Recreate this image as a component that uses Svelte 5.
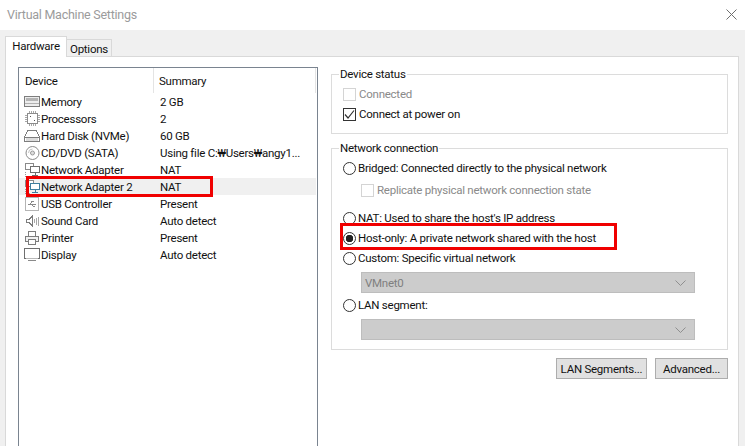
<script>
  const devices = [
    { icon: 'memory', name: 'Memory', summary: '2 GB' },
    { icon: 'cpu', name: 'Processors', summary: '2' },
    { icon: 'disk', name: 'Hard Disk (NVMe)', summary: '60 GB' },
    { icon: 'cd', name: 'CD/DVD (SATA)', summary: 'Using file C:₩Users₩angy1...' },
    { icon: 'net', name: 'Network Adapter', summary: 'NAT' },
    { icon: 'net', name: 'Network Adapter 2', summary: 'NAT', selected: true },
    { icon: 'usb', name: 'USB Controller', summary: 'Present' },
    { icon: 'sound', name: 'Sound Card', summary: 'Auto detect' },
    { icon: 'printer', name: 'Printer', summary: 'Present' },
    { icon: 'display', name: 'Display', summary: 'Auto detect' }
  ];
</script>

{#snippet deviceIcon(icon, selected)}
  <svg class="dev-icon" width="17" height="17" viewBox="0 0 17 17" fill="none" stroke="#7d7d7d" stroke-width="1" shape-rendering="crispEdges">
    {#if icon === 'memory'}
      <rect x="0.5" y="3.500" width="15" height="10" fill="#ececec" />
      <rect x="2" y="5" width="12" height="3" fill="#b4b4b4" stroke="none" />
      <path d="M1 10.500h14" stroke="#b0b0b0" />
    {:else if icon === 'cpu'}
      <rect x="3.500" y="3.500" width="10" height="10" fill="#fff" stroke="#8c8c8c" />
      <path d="M5 1v2M7 1v2M9 1v2M11 1v2M5 14v2M7 14v2M9 14v2M11 14v2M1 5h2M1 7h2M1 9h2M1 11h2M14 5h2M14 7h2M14 9h2M14 11h2" stroke="#a8a8a8" />
      <rect x="6" y="6" width="1" height="1" fill="#555" stroke="none" />
      <rect x="10" y="10" width="1" height="1" fill="#555" stroke="none" />
    {:else if icon === 'disk'}
      <path d="M3.500 3.500h9l3 7v4h-15v-4z" fill="#fff" />
      <path d="M0.500 10.500h15" />
      <rect x="2" y="11" width="12" height="3" fill="#dcdcdc" stroke="none" />
    {:else if icon === 'cd'}
      <circle cx="8.500" cy="9" r="6.500" fill="#fff" stroke="#8c8c8c" shape-rendering="auto" />
      <circle cx="8.500" cy="9" r="2" fill="#dedede" stroke="#9a9a9a" shape-rendering="auto" />
      <path d="M4.500 9a4 4 0 0 1 4-4" stroke="#c4c4c4" shape-rendering="auto" />
    {:else if icon === 'net'}
      <rect x="1.500" y="2.500" width="8" height="6" fill="#fff" stroke="#8a8a8a" />
      <rect x="6.500" y="5.500" width="9" height="6" fill="#fff" stroke={selected ? '#3f7f9f' : '#6f6f6f'} />
      <path d="M11 12v2M8 14.500h6" stroke={selected ? '#3f7f9f' : '#6f6f6f'} />
      <path d="M1 11h1M1 13h1M1 15h1M3 15h1M5 15h1" stroke="#9a9a9a" />
    {:else if icon === 'usb'}
      <rect x="1.500" y="2.500" width="13" height="13" fill="#fff" stroke="#b4b4b4" />
      <path d="M4 9h8M6 9l2-2.500h2M7 9l2 2h1.500" stroke="#8a8a8a" />
    {:else if icon === 'sound'}
      <path d="M2.500 7.500h2.500l3-3v9l-3-3h-2.500z" fill="#fff" />
      <path d="M10 7v4M12 5.500v7M14 4.500v9" stroke="#a8a8a8" />
    {:else if icon === 'printer'}
      <rect x="4.500" y="2.500" width="7" height="5" fill="#fff" />
      <rect x="1.500" y="7.500" width="13" height="5" fill="#f2f2f2" />
      <rect x="4.500" y="10.500" width="7" height="5" fill="#fff" />
    {:else if icon === 'display'}
      <rect x="0.500" y="2.500" width="15" height="10" fill="#fff" stroke="#6f6f6f" />
      <rect x="2" y="12" width="12" height="1" fill="#b8b8b8" stroke="none" />
      <path d="M4 14.500h8" stroke="#8a8a8a" />
    {/if}
  </svg>
{/snippet}

{#snippet radio(checked)}
  <span class="radio" class:checked></span>
{/snippet}

<div class="window">
  <header class="titlebar">
    <span class="title">Virtual Machine Settings</span>
    <svg class="close" width="11" height="11" viewBox="0 0 11 11" stroke="#6e6e6e" stroke-width="1">
      <path d="M0.500 0.500l10 10M10.500 0.500l-10 10" />
    </svg>
  </header>

  <div class="body">
    <div class="tabs">
      <div class="tab active">Hardware</div>
      <div class="tab">Options</div>
    </div>

    <div class="panel">
      <div class="device-list">
        <div class="list-head">
          <span class="col-device">Device</span>
          <span class="col-summary">Summary</span>
        </div>
        {#each devices as d}
          <div class="row" class:selected={d.selected}>
            {@render deviceIcon(d.icon, d.selected)}
            <span class="name">{d.name}</span>
            <span class="summary">{d.summary}</span>
            {#if d.selected}<span class="mark mark-row"></span>{/if}
          </div>
        {/each}
      </div>

      <div class="settings">
        <fieldset class="group status">
          <legend>Device status</legend>
          <label class="opt disabled"><span class="check"></span>Connected</label>
          <label class="opt">
            <span class="check on">
              <svg width="13" height="13" viewBox="0 0 13 13" fill="none" stroke="#333" stroke-width="1.200"><path d="M2 6.500l3 3.500 6-7.500" /></svg>
            </span>
            Connect at power on
          </label>
        </fieldset>

        <fieldset class="group network">
          <legend>Network connection</legend>
          <div class="opt">{@render radio(false)}Bridged: Connected directly to the physical network</div>
          <div class="opt sub disabled"><span class="check"></span>Replicate physical network connection state</div>
          <div class="opt nat">{@render radio(false)}NAT: Used to share the host's IP address</div>
          <div class="opt host">
            {@render radio(true)}Host-only: A private network shared with the host
            <span class="mark mark-host"></span>
          </div>
          <div class="opt">{@render radio(false)}Custom: Specific virtual network</div>
          <div class="combo">
            <span>VMnet0</span>
            <svg width="11" height="6" viewBox="0 0 11 6" fill="none" stroke="#8f8f8f"><path d="M0.500 0.500l5 5 5-5" /></svg>
          </div>
          <div class="opt lan">{@render radio(false)}LAN segment:</div>
          <div class="combo">
            <span></span>
            <svg width="11" height="6" viewBox="0 0 11 6" fill="none" stroke="#8f8f8f"><path d="M0.500 0.500l5 5 5-5" /></svg>
          </div>
        </fieldset>

        <div class="buttons">
          <button class="btn lan-btn">LAN Segments...</button>
          <button class="btn adv-btn">Advanced...</button>
        </div>
      </div>
    </div>
  </div>
</div>

<style>
  :global(body) {
    margin: 0;
    overflow: hidden;
  }

  .window {
    width: 745px;
    height: 446px;
    display: flex;
    flex-direction: column;
    overflow: hidden;
    background: #fff;
    font-family: Roboto, "Liberation Sans", sans-serif;
    font-size: 11.5px;
    letter-spacing: -0.25px;
    color: #111;
  }

  .titlebar {
    height: 30px;
    flex: none;
    display: flex;
    align-items: center;
    justify-content: space-between;
    padding: 0 8px 2px 7px;
    box-sizing: border-box;
  }

  .title {
    font-size: 12.5px;
    color: #9b9b9b;
  }

  .body {
    flex: 1;
    min-height: 0;
    background: #f0f0f0;
    padding: 6px 6px 0 5px;
    display: flex;
    flex-direction: column;
  }

  .tabs {
    display: flex;
    align-items: flex-end;
    height: 21px;
    flex: none;
    position: relative;
    z-index: 1;
  }

  .tab {
    height: 18px;
    line-height: 19px;
    width: 45px;
    box-sizing: border-box;
    text-align: center;
    border: 1px solid #d9d9d9;
    border-left: 0;
    border-bottom: 0;
  }

  .tab.active {
    height: 21px;
    line-height: 19px;
    width: 62px;
    background: #fff;
    border-left: 1px solid #d9d9d9;
  }

  .panel {
    flex: 1;
    min-height: 0;
    background: #fff;
    border: 1px solid #d9d9d9;
    border-bottom: 0;
    margin-top: -1px;
    padding: 10px 10px 0 12px;
    display: flex;
    gap: 13px;
  }

  .device-list {
    width: 300px;
    flex: none;
    box-sizing: border-box;
    border: 1px solid #7a8490;
    border-bottom: 0;
    margin-bottom: -40px;
  }

  .list-head {
    display: flex;
    height: 25px;
    line-height: 26px;
  }

  .col-device {
    width: 135px;
    box-sizing: border-box;
    padding-left: 6px;
    border-right: 1px solid #e4e4e4;
  }

  .col-summary {
    flex: 1;
    padding-left: 5px;
    margin-right: 1px;
    border-right: 1px solid #e4e4e4;
  }

  .row {
    display: flex;
    align-items: center;
    height: 17px;
    padding-left: 5px;
    margin-right: 1px;
    position: relative;
  }

  .row.selected {
    background: #f0f0f0;
  }

  .dev-icon {
    flex: none;
  }

  .name {
    flex: none;
    width: 119px;
    white-space: nowrap;
  }

  .summary {
    white-space: nowrap;
  }

  .mark {
    position: absolute;
    box-sizing: border-box;
    border: 3px solid #f00000;
    pointer-events: none;
  }

  .mark-row {
    left: 7px;
    top: -2px;
    width: 187px;
    height: 21px;
  }

  .settings {
    flex: 1;
    min-width: 0;
    display: flex;
    flex-direction: column;
  }

  .group {
    margin: 0;
    padding: 0 0 0 10px;
    border: 1px solid #dcdcdc;
    min-width: 0;
  }

  .group legend {
    margin-left: -3px;
    padding: 0 1px;
    line-height: 16px;
  }

  .status {
    height: 68px;
    box-sizing: border-box;
    margin-top: -1px;
    padding-top: 2px;
  }

  .network {
    height: 210px;
    box-sizing: border-box;
    margin-top: 6px;
    padding-top: 2px;
  }

  .opt {
    display: flex;
    align-items: center;
    height: 20px;
    position: relative;
    white-space: nowrap;
  }

  .opt.disabled {
    color: #8a8a8a;
  }

  .sub {
    margin: 2px 0 0 18px;
  }

  .nat {
    margin-top: 8px;
  }

  .lan {
    margin-top: 2px;
  }

  .check {
    width: 13px;
    height: 13px;
    box-sizing: border-box;
    border: 1px solid #d4d4d4;
    margin: 0 3px 0 1px;
    flex: none;
    display: flex;
  }

  .check.on {
    border-color: #333;
  }

  .check svg {
    margin: -1px;
  }

  .radio {
    width: 13px;
    height: 13px;
    box-sizing: border-box;
    border: 1px solid #333;
    border-radius: 50%;
    margin: 0 2px 0 1px;
    flex: none;
  }

  .radio.checked {
    background: radial-gradient(circle, #222 0 3.500px, #fff 4px);
  }

  .mark-host {
    left: -2px;
    top: -5px;
    width: 277px;
    height: 27px;
  }

  .combo {
    height: 21px;
    box-sizing: border-box;
    margin: 4px 32px 0 19px;
    padding: 0 8px 0 3px;
    background: #cccccc;
    border: 1px solid #bdbdbd;
    color: #7f7f7f;
    display: flex;
    align-items: center;
    justify-content: space-between;
  }

  .buttons {
    display: flex;
    justify-content: flex-end;
    gap: 8px;
    margin-top: 8px;
  }

  .btn {
    height: 21px;
    padding: 0;
    box-sizing: border-box;
    background: #e1e1e1;
    border: 1px solid #adadad;
    font: inherit;
    letter-spacing: inherit;
    color: #111;
    white-space: nowrap;
  }

  .lan-btn {
    width: 91px;
  }

  .adv-btn {
    width: 73px;
  }
</style>
